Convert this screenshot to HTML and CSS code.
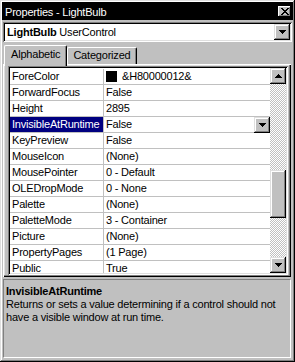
FILE: index.html
```html
<!DOCTYPE html>
<html lang="en">

<head>
    <meta charset="UTF-8">
    <title>Properties - LightBulb</title>
    <link rel="stylesheet" href="styles.css">
</head>

<body>
    <div class="window">
        <!-- Caption -->
        <div class="titlebar">
            <span class="title">Properties - LightBulb</span>
            <span class="close">
                <svg width="8" height="7" viewBox="0 0 8 7" shape-rendering="crispEdges">
                    <path d="M0 0h2v1h1v1h2v-1h1v-1h2v1h-1v1h-1v1h-1v1h1v1h1v1h1v1h-2v-1h-1v-1h-2v1h-1v1h-2v-1h1v-1h1v-1h1v-1h-1v-1h-1v-1h-1z" fill="#000"/>
                </svg>
            </span>
        </div>

        <!-- Object selector -->
        <div class="combo">
            <span class="combo-text"><b>LightBulb</b> UserControl</span>
            <span class="btn combo-btn">
                <svg width="7" height="4" viewBox="0 0 7 4" shape-rendering="crispEdges"><path d="M0 0h7v1h-1v1h-1v1h-1v1h-1v-1h-1v-1h-1v-1h-1z"/></svg>
            </span>
        </div>

        <!-- Tabs -->
        <div class="tabs">
            <div class="tab active">Alphabetic</div>
            <div class="tab">Categorized</div>
        </div>

        <div class="panel">
            <div class="grid">
                <div class="rows">
                    <div class="row">
                        <div class="name">ForeColor</div>
                        <div class="value"><span class="swatch"></span>&amp;H80000012&amp;</div>
                    </div>
                    <div class="row">
                        <div class="name">ForwardFocus</div>
                        <div class="value">False</div>
                    </div>
                    <div class="row">
                        <div class="name">Height</div>
                        <div class="value">2895</div>
                    </div>
                    <div class="row selected">
                        <div class="name">InvisibleAtRuntime</div>
                        <div class="value">
                            <span class="value-text">False</span>
                            <span class="btn cell-btn">
                                <svg width="7" height="4" viewBox="0 0 7 4" shape-rendering="crispEdges"><path d="M0 0h7v1h-1v1h-1v1h-1v1h-1v-1h-1v-1h-1v-1h-1z"/></svg>
                            </span>
                        </div>
                    </div>
                    <div class="row">
                        <div class="name">KeyPreview</div>
                        <div class="value">False</div>
                    </div>
                    <div class="row">
                        <div class="name">MouseIcon</div>
                        <div class="value">(None)</div>
                    </div>
                    <div class="row">
                        <div class="name">MousePointer</div>
                        <div class="value">0 - Default</div>
                    </div>
                    <div class="row">
                        <div class="name">OLEDropMode</div>
                        <div class="value">0 - None</div>
                    </div>
                    <div class="row">
                        <div class="name">Palette</div>
                        <div class="value">(None)</div>
                    </div>
                    <div class="row">
                        <div class="name">PaletteMode</div>
                        <div class="value">3 - Container</div>
                    </div>
                    <div class="row">
                        <div class="name">Picture</div>
                        <div class="value">(None)</div>
                    </div>
                    <div class="row">
                        <div class="name">PropertyPages</div>
                        <div class="value">(1 Page)</div>
                    </div>
                    <div class="row">
                        <div class="name">Public</div>
                        <div class="value">True</div>
                    </div>
                </div>

                <!-- Vertical scrollbar -->
                <div class="scrollbar">
                    <span class="btn scroll-btn">
                        <svg width="7" height="4" viewBox="0 0 7 4" shape-rendering="crispEdges"><path d="M3 0h1v1h1v1h1v1h1v1h-7v-1h1v-1h1v-1h1z"/></svg>
                    </span>
                    <div class="track">
                        <div class="btn thumb"></div>
                    </div>
                    <span class="btn scroll-btn">
                        <svg width="7" height="4" viewBox="0 0 7 4" shape-rendering="crispEdges"><path d="M0 0h7v1h-1v1h-1v1h-1v1h-1v-1h-1v-1h-1v-1h-1z"/></svg>
                    </span>
                </div>
            </div>
        </div>

        <!-- Description pane -->
        <div class="desc">
            <div class="desc-title">InvisibleAtRuntime</div>
            <p>Returns or sets a value determining if a control should not have a visible window at run time.</p>
        </div>
    </div>
</body>

</html>
```

FILE: styles.css
```css
* {
    margin: 0;
    padding: 0;
    box-sizing: border-box;
}

body {
    font-family: 'Liberation Sans', Arial, sans-serif;
    font-size: 11px;
    letter-spacing: -0.2px;
    background-color: #c0c0c0;
    color: #000;
}

.window {
    width: 295px;
    height: 362px;
    padding: 2px;
    display: flex;
    flex-direction: column;
    box-shadow: inset -1px -1px #000, inset 1px 1px #dfdfdf, inset -2px -2px #808080, inset 2px 2px #fff;
}

/* raised button bevel */
.btn {
    display: flex;
    align-items: center;
    justify-content: center;
    background-color: #c0c0c0;
    box-shadow: inset -1px -1px #000, inset 1px 1px #dfdfdf, inset -2px -2px #808080, inset 2px 2px #fff;
}

.titlebar {
    height: 18px;
    background-color: #000;
    color: #fff;
    display: flex;
    align-items: center;
    justify-content: space-between;
    padding: 0 2px 0 3px;
}

.title {
    line-height: 18px;
    padding-top: 1px;
}

.close {
    width: 13px;
    height: 11px;
    display: flex;
    align-items: center;
    justify-content: center;
    background-color: #c0c0c0;
    box-shadow: inset -1px -1px #000, inset 1px 1px #fff, inset -2px -2px #808080;
}

.combo {
    margin: 2px 1px 0 1px;
    height: 20px;
    background-color: #fff;
    display: flex;
    align-items: center;
    padding: 0 2px 0 4px;
    box-shadow: inset 1px 1px #808080, inset -1px -1px #fff, inset 2px 2px #000, inset -2px -2px #dfdfdf;
}

.combo-text {
    flex: 1;
}

.combo-btn {
    width: 16px;
    height: 16px;
}

.tabs {
    display: flex;
    align-items: flex-end;
    height: 19px;
    margin: 3px 0 0 2px;
}

.tab {
    height: 17px;
    line-height: 15px;
    padding: 0 5px;
    border-top: 1px solid #fff;
    border-left: 1px solid #fff;
    border-right: 1px solid #000;
    border-radius: 2px 2px 0 0;
    box-shadow: inset -1px 0 #808080;
    background-color: #c0c0c0;
}

.tab.active {
    position: relative;
    z-index: 1;
    height: 21px;
    margin-bottom: -2px;
    padding: 1px 6px 0 6px;
}

.panel {
    height: 213px;
    margin: 0 2px 0 1px;
    padding: 2px 3px 2px 5px;
    box-shadow: inset 1px 1px #fff, inset -1px -1px #000, inset -2px -2px #808080, inset 2px 2px #dfdfdf;
}

.grid {
    height: 100%;
    padding: 2px;
    display: flex;
    background-color: #fff;
    box-shadow: inset 1px 1px #808080, inset -1px -1px #fff, inset 2px 2px #000, inset -2px -2px #dfdfdf;
}

.rows {
    flex: 1;
    overflow: hidden;
    padding-top: 1px;
    background-color: #fff;
}

.row {
    display: flex;
    height: 16px;
    border-bottom: 1px solid #c0c0c0;
    line-height: 15px;
}

.name {
    width: 94px;
    padding-left: 2px;
    border-right: 1px solid #c0c0c0;
    white-space: nowrap;
    overflow: hidden;
}

.value {
    flex: 1;
    display: flex;
    align-items: flex-start;
    padding-left: 2px;
    white-space: nowrap;
}

.swatch {
    width: 11px;
    height: 11px;
    margin: 2px 5px 0 0;
    background-color: #000;
}

.selected .name {
    background-color: #000080;
    color: #fff;
}

.value-text {
    flex: 1;
}

.cell-btn {
    width: 16px;
    height: 16px;
}

.scrollbar {
    width: 16px;
    display: flex;
    flex-direction: column;
}

.scroll-btn {
    width: 16px;
    height: 16px;
}

.track {
    flex: 1;
    background: repeating-conic-gradient(#c0c0c0 0 25%, #fff 0 50%) 0 0 / 2px 2px;
}

.thumb {
    height: 48px;
    margin-top: 86px;
}

.desc {
    height: 79px;
    margin: 2px 2px 0 1px;
    padding: 5px 2px 0 2px;
    border: 1px solid;
    border-color: #808080 #fff #fff #808080;
    line-height: 13px;
}

.desc-title {
    font-weight: bold;
}
```
